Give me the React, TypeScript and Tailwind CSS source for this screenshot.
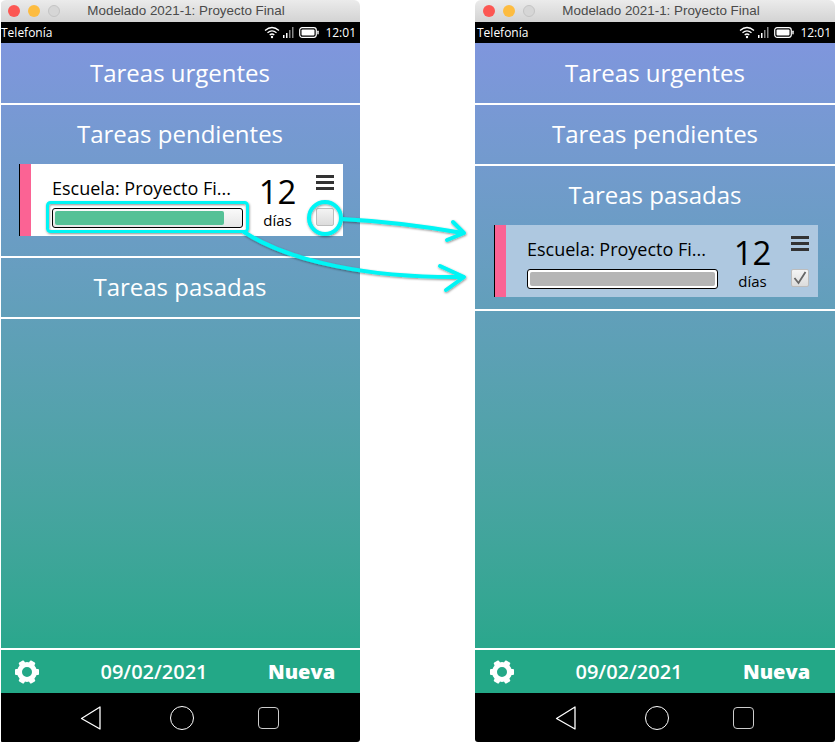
import React from "react";

function Section({ title, h }: { title: string; h: string }) {
  return (
    <div className={`${h} flex items-center justify-center text-white text-[24px] leading-none`}>{title}</div>
  );
}

function Line() {
  return <div className="h-[2px] bg-white" />;
}

function Card({ done }: { done?: boolean }) {
  return (
    <div className={`h-[72px] ml-[19px] w-[324px] flex border-l border-black ${done ? "bg-[#aec8e0]" : "bg-white"}`}>
      <div className="w-[11px] bg-[#fb6394]" />
      <div className="w-[21px]" />
      <div className="w-[191px] flex flex-col">
        <div className="h-[44px] pt-[12px] text-[18px] leading-[24px] text-black whitespace-nowrap">Escuela: Proyecto Fi...</div>
        <div className={`h-[20px] rounded-[3px] border border-black p-[2px] ${done ? "bg-white" : "bg-gradient-to-b from-[#fafafa] to-[#e6e6e6]"}`}>
          <div className={`h-full rounded-[2px] ${done ? "bg-[#b5b5b5] w-full" : "bg-[#55c196] w-[169px]"}`} />
        </div>
      </div>
      <div className="w-[62px] flex flex-col items-center pl-[7px]">
        <div className="text-[33px] leading-[32px] mt-[12px] text-black">12</div>
        <div className="text-[15px] leading-[20px] mt-[2px] text-black">días</div>
      </div>
      <div className="flex-1 flex flex-col items-center pl-[2px]">
        <div className="mt-[11px] w-[18px] flex flex-col gap-[3px]">
          <div className="h-[3px] bg-[#333]" />
          <div className="h-[3px] bg-[#333]" />
          <div className="h-[3px] bg-[#333]" />
        </div>
        <div className="mt-[18px] w-[18px] h-[18px] rounded-[2px] border border-[#bdbdbd] bg-gradient-to-b from-[#f4f4f4] to-[#dcdcdc] flex items-center justify-center">
          {done && (
            <svg width="14" height="14" viewBox="0 0 14 14" fill="none">
              <path d="M1.5 7 L5.5 12 L12.5 1" stroke="#666" strokeWidth="1.8" />
            </svg>
          )}
        </div>
      </div>
    </div>
  );
}

function Gear() {
  return (
    <svg width="26" height="26" viewBox="0 0 26 26">
      <g fill="#fff">
        {[30, 90, 150, 210, 270, 330].map((a) => (
          <rect key={a} x="10" y="1" width="6" height="6" rx="1" transform={`rotate(${a} 13 13)`} />
        ))}
      </g>
      <circle cx="13" cy="13" r="7.5" fill="none" stroke="#fff" strokeWidth="5" />
    </svg>
  );
}

function Phone({ moved }: { moved?: boolean }) {
  return (
    <div className={`w-[360px] h-[742px] flex flex-col rounded-t-[6px] rounded-b-[3px] overflow-hidden ${moved ? "" : "[clip-path:inset(0_0_0_1px)]"}`}>
      <div className="h-[22px] shrink-0 bg-gradient-to-b from-[#ebebeb] to-[#d3d3d3] flex items-center relative">
        <div className="flex gap-[8px] pl-[8px]">
          <div className="w-[12px] h-[12px] rounded-full bg-[#fc5753]" />
          <div className="w-[12px] h-[12px] rounded-full bg-[#fdbc40]" />
          <div className="w-[12px] h-[12px] rounded-full bg-[#d6d6d6] border border-[#c4c4c4]" />
        </div>
        <div className="absolute inset-0 flex items-center justify-center pl-[12px] text-[13.4px] text-[#4a4a4a] font-['Liberation_Sans',sans-serif]">
          Modelado 2021-1: Proyecto Final
        </div>
      </div>
      <div className={`h-[21px] shrink-0 bg-black flex items-center text-white text-[12px] pr-[4px] ${moved ? "pl-[2px]" : "pl-[1px]"}`}>
        <span>Telefonía</span>
        <div className="ml-auto flex items-center">
          <svg width="16" height="13" viewBox="0 0 16 13" fill="none" stroke="#fff">
            <path d="M1 4.5 Q8 -1.5 15 4.5" strokeWidth="1.3" />
            <path d="M3.5 6.8 Q8 3 12.5 6.8" strokeWidth="1.3" />
            <path d="M5.7 9 Q8 7 10.3 9" strokeWidth="1.3" />
            <circle cx="8" cy="11" r="1.2" fill="#fff" stroke="none" />
          </svg>
          <svg className="ml-[2px]" width="12" height="11" viewBox="0 0 12 11">
            <rect x="1" y="8" width="1.5" height="3" fill="#fff" />
            <rect x="4" y="6" width="1.5" height="5" fill="#fff" />
            <rect x="7" y="3" width="1.5" height="8" fill="#888" />
            <rect x="10" y="0" width="1.5" height="11" fill="#888" />
          </svg>
          <svg className="ml-[5px]" width="20" height="11" viewBox="0 0 20 11" fill="none">
            <rect x="0.7" y="0.7" width="16.6" height="9.6" rx="2.5" stroke="#fff" strokeWidth="1.2" />
            <rect x="2.5" y="2.5" width="13" height="6" rx="1" fill="#fff" />
            <rect x="18.3" y="3.5" width="1.4" height="4" rx="0.7" fill="#fff" />
          </svg>
          <span className="ml-[6px] text-[12px]">12:01</span>
        </div>
      </div>
      <div className="flex-1 flex flex-col bg-gradient-to-b from-[#7f96dd] to-[#29a78c]">
        <Section title="Tareas urgentes" h="h-[60px]" />
        <Line />
        <Section title="Tareas pendientes" h="h-[59px] pb-[2px]" />
        {moved ? (
          <>
            <Line />
            <Section title="Tareas pasadas" h="h-[59px] pb-[2px]" />
            <Card done />
            <div className="h-[12px]" />
            <Line />
          </>
        ) : (
          <>
            <Card />
            <div className="h-[20px]" />
            <Line />
            <Section title="Tareas pasadas" h="h-[59px] pb-[2px]" />
            <Line />
          </>
        )}
        <div className="flex-1" />
        <Line />
      </div>
      <div className="h-[43px] shrink-0 flex items-center bg-[#23a887] text-white">
        <div className="w-[53px] flex justify-center"><Gear /></div>
        <div className="w-[202px] text-center text-[20px] font-semibold">09/02/2021</div>
        <div className="pl-[13px] text-[20px] font-extrabold">Nueva</div>
      </div>
      <div className="h-[49px] shrink-0 bg-black flex items-center">
        <svg className="ml-[80px]" width="22" height="26" viewBox="0 0 22 26" fill="none" stroke="#fff" strokeWidth="1.3">
          <path d="M20 2 L1.5 13.5 L20 24 Z" strokeLinejoin="round" />
        </svg>
        <div className="ml-[68px] w-[24px] h-[24px] rounded-full border-[1.5px] border-white" />
        <div className="ml-[64px] w-[21px] h-[22px] rounded-[4px] border-[1.5px] border-[#ccc]" />
      </div>
    </div>
  );
}

export default function App() {
  return (
    <div className="relative w-[835px] h-[742px] bg-white flex justify-between overflow-hidden font-['Open_Sans',sans-serif]">
      <Phone />
      <Phone moved />
      <svg className="absolute inset-0 pointer-events-none" width="835" height="742" viewBox="0 0 835 742" fill="none">
        <defs>
          <filter id="s" x="-10%" y="-10%" width="120%" height="130%">
            <feDropShadow dx="0.5" dy="1" stdDeviation="1" floodColor="#000" floodOpacity="0.45" />
          </filter>
        </defs>
        <g stroke="#00f5f5" filter="url(#s)" strokeLinecap="round" strokeLinejoin="round">
          <circle cx="325" cy="218" r="16" strokeWidth="4" />
          <rect x="47.5" y="202.5" width="200" height="29" rx="3" strokeWidth="3" />
          <path d="M342 219 Q400 222 463 233" strokeWidth="4" />
          <path d="M453 222 L464 233 L447 240" strokeWidth="4" />
          <path d="M244 232 C290 262 370 278 463 277" strokeWidth="4" />
          <path d="M440 266 L464 277 L446 290" strokeWidth="4" />
        </g>
      </svg>
    </div>
  );
}
